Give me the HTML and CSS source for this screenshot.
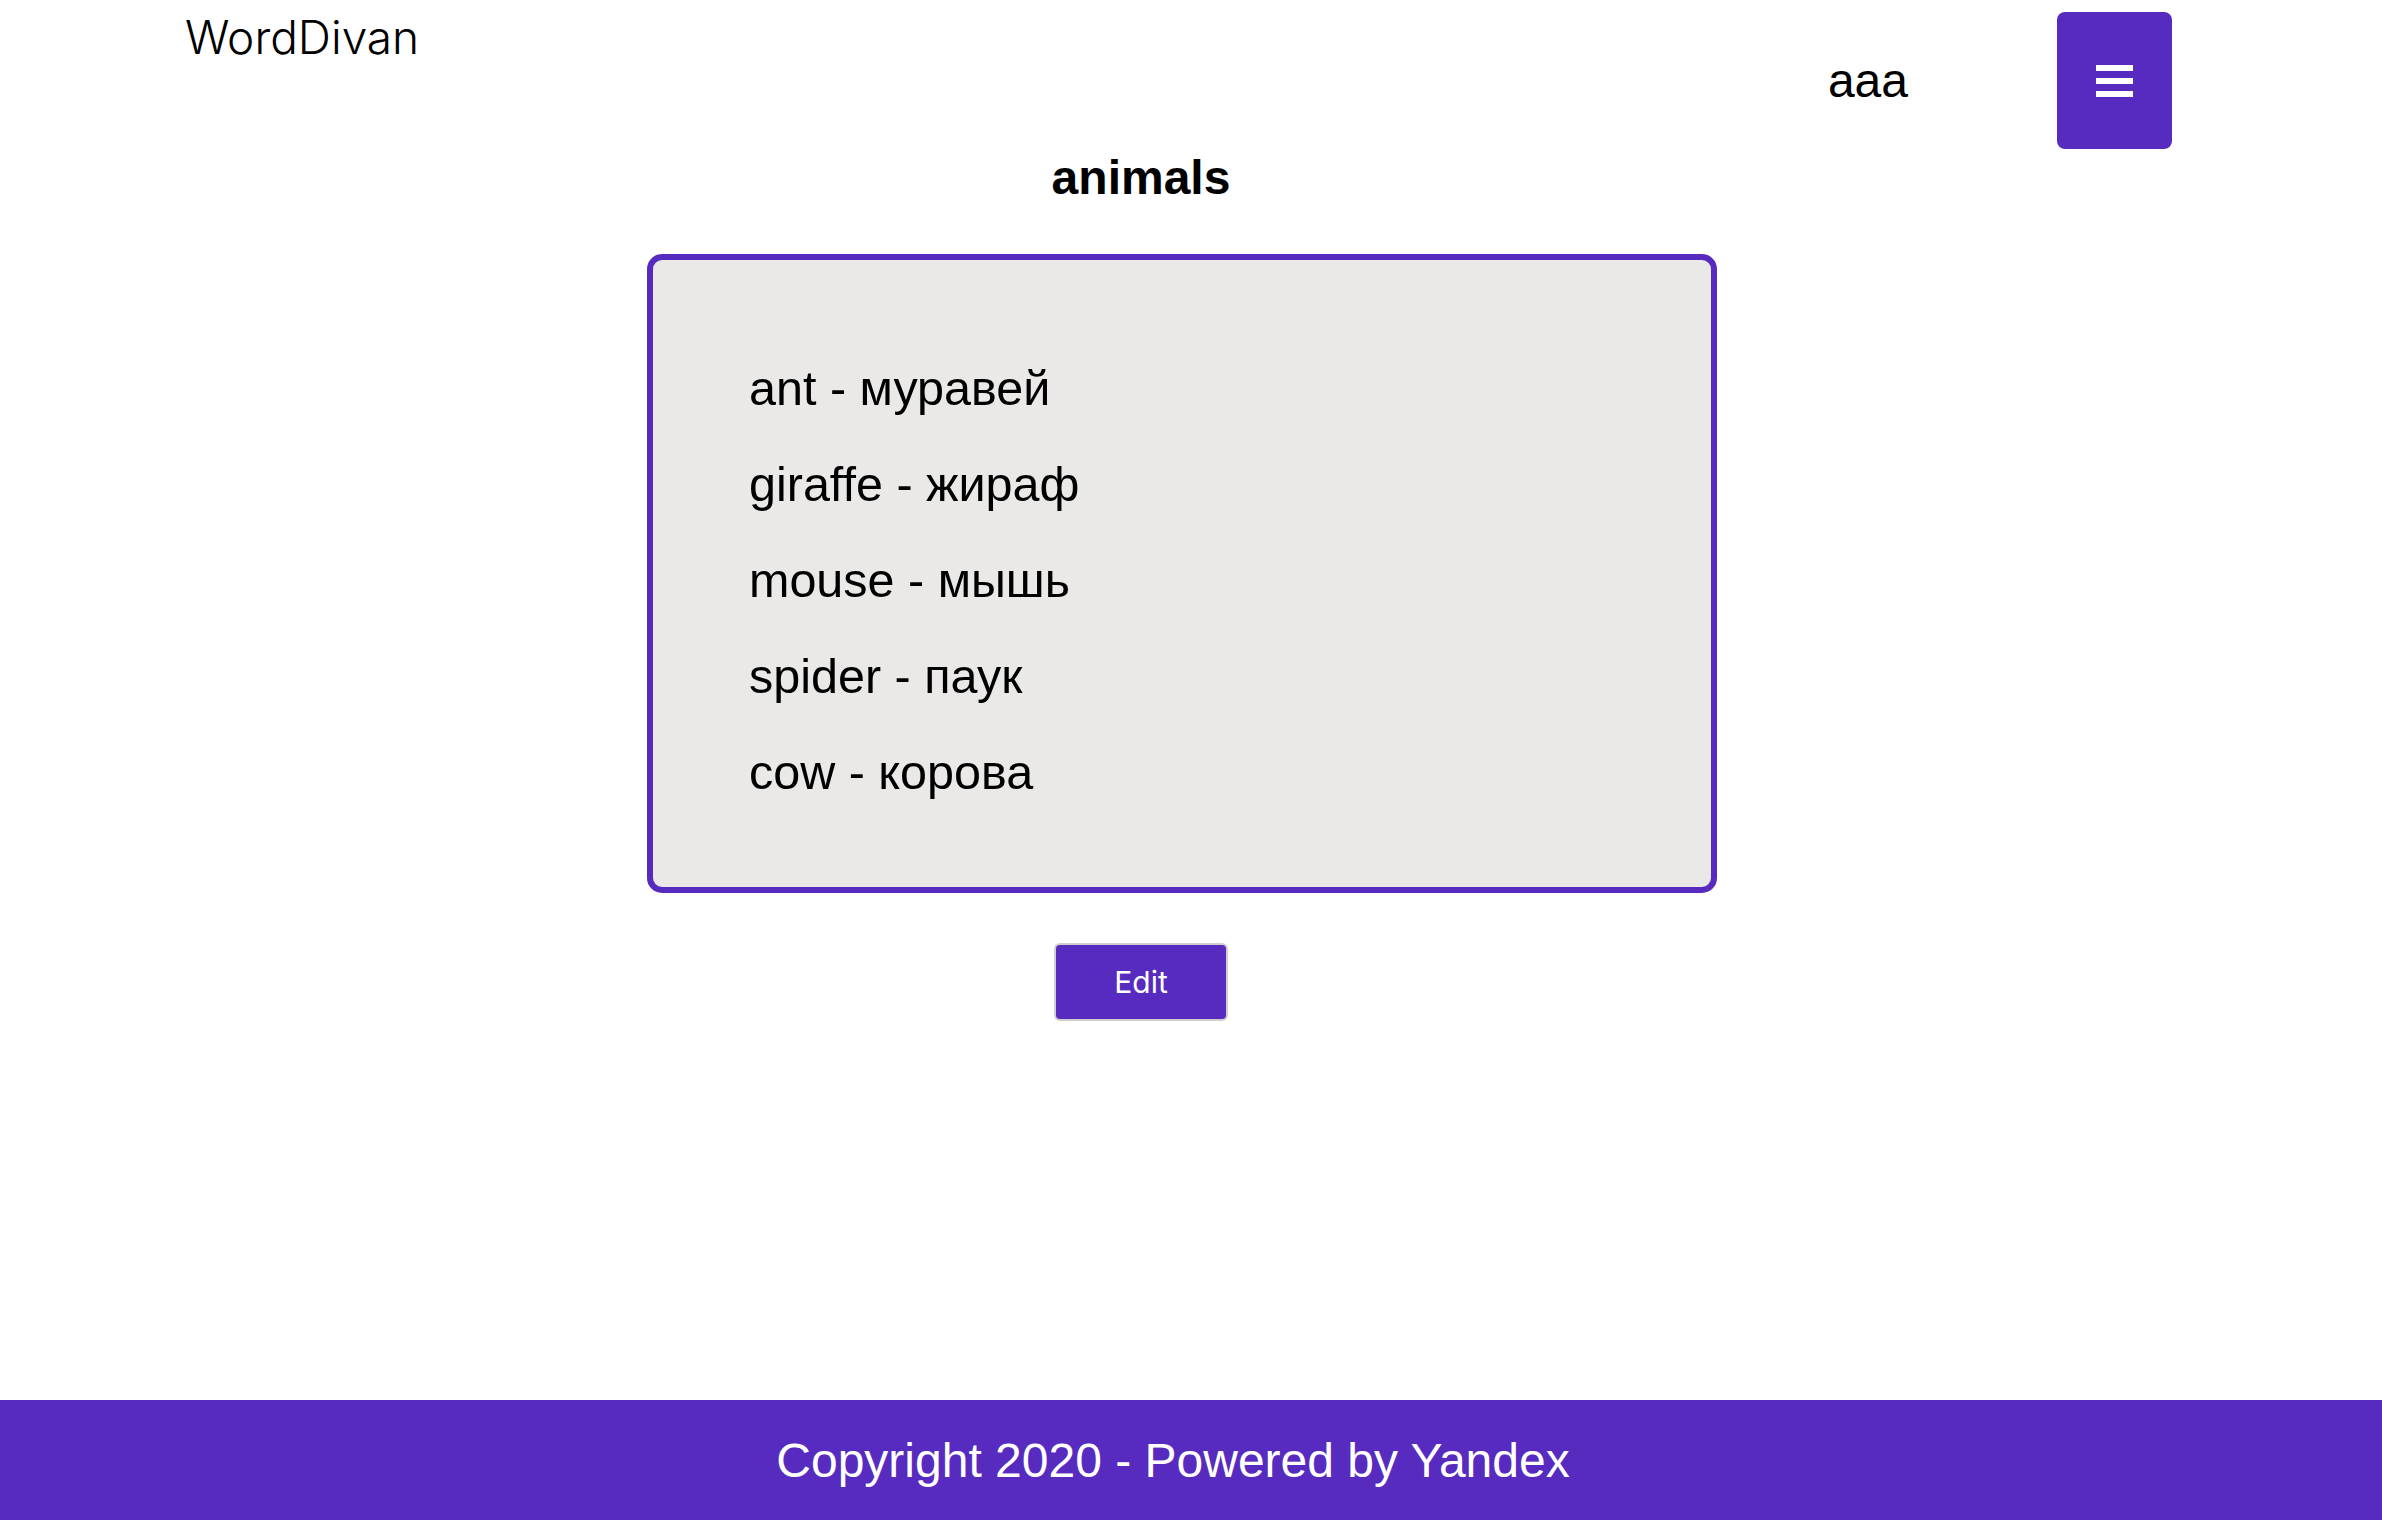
FILE: index.html
```html
<!DOCTYPE html>
<html lang="en">
<head>
<meta charset="utf-8">
<title>WordDivan</title>
<link rel="stylesheet" href="styles.css">
</head>
<body>
<header class="header">
  <div class="logo">WordDivan</div>
  <div class="header-right">
    <span class="user">aaa</span>
    <button class="menu-btn" aria-label="menu">
      <svg width="37" height="32" viewBox="0 0 37 32"><rect x="0" y="0" width="37" height="6" fill="#fff"/><rect x="0" y="13" width="37" height="6" fill="#fff"/><rect x="0" y="26" width="37" height="6" fill="#fff"/></svg>
    </button>
  </div>
</header>
<main class="main">
  <h1 class="title">animals</h1>
  <div class="card">
    <ul class="words">
      <li>ant - муравей</li>
      <li>giraffe - жираф</li>
      <li>mouse - мышь</li>
      <li>spider - паук</li>
      <li>cow - корова</li>
    </ul>
  </div>
  <div class="actions">
    <button class="edit-btn">Edit</button>
  </div>
</main>
<footer class="footer">Copyright 2020 - Powered by Yandex</footer>
</body>
</html>
```
FILE: styles.css
```css
html, body {
  margin: 0;
  padding: 0;
}
body {
  font-family: "Liberation Sans", Arial, sans-serif;
  color: #000;
  background: #fff;
  min-height: 100vh;
  display: flex;
  flex-direction: column;
}
.header {
  display: flex;
  justify-content: space-between;
  align-items: flex-start;
  padding: 12px 210px 0 185px;
  height: 137px;
}
.logo {
  font-family: Inter, "Liberation Sans", sans-serif;
  font-weight: 300;
  font-size: 46px;
  line-height: 46px;
  margin-top: 2px;
}
.header-right {
  display: flex;
  align-items: center;
  gap: 149px;
  height: 137px;
}
.user {
  font-size: 48px;
  line-height: 48px;
}
.menu-btn {
  width: 115px;
  height: 137px;
  border: none;
  border-radius: 8px;
  background: #572bbf;
  display: flex;
  align-items: center;
  justify-content: center;
  padding: 0;
}
.main {
  flex: 1;
}
.title {
  margin: 5px 0 0 0;
  padding-right: 100px;
  text-align: center;
  font-size: 48px;
  line-height: 48px;
  font-weight: bold;
}
.card {
  margin: 52px 0 0 647px;
  width: 1070px;
  box-sizing: border-box;
  border: 6px solid #572bbf;
  border-radius: 15px;
  background: #eae9e7;
}
.words {
  list-style: none;
  margin: 0;
  padding: 80px 0 67px 96px;
}
.words li {
  font-size: 48.5px;
  line-height: 96px;
}
.actions {
  display: flex;
  justify-content: center;
  padding-right: 100px;
  margin-top: 50px;
}
.edit-btn {
  width: 174px;
  height: 78px;
  box-sizing: border-box;
  border: 2px solid #cfcfcf;
  border-radius: 6px;
  background: #572bbf;
  color: #fff;
  font-family: Inter, "Liberation Sans", sans-serif;
  font-size: 30px;
  padding: 0;
}
.footer {
  height: 120px;
  background: #572bbf;
  color: #fff;
  font-size: 48px;
  display: flex;
  align-items: center;
  justify-content: center;
  padding-right: 36px;
}
```
